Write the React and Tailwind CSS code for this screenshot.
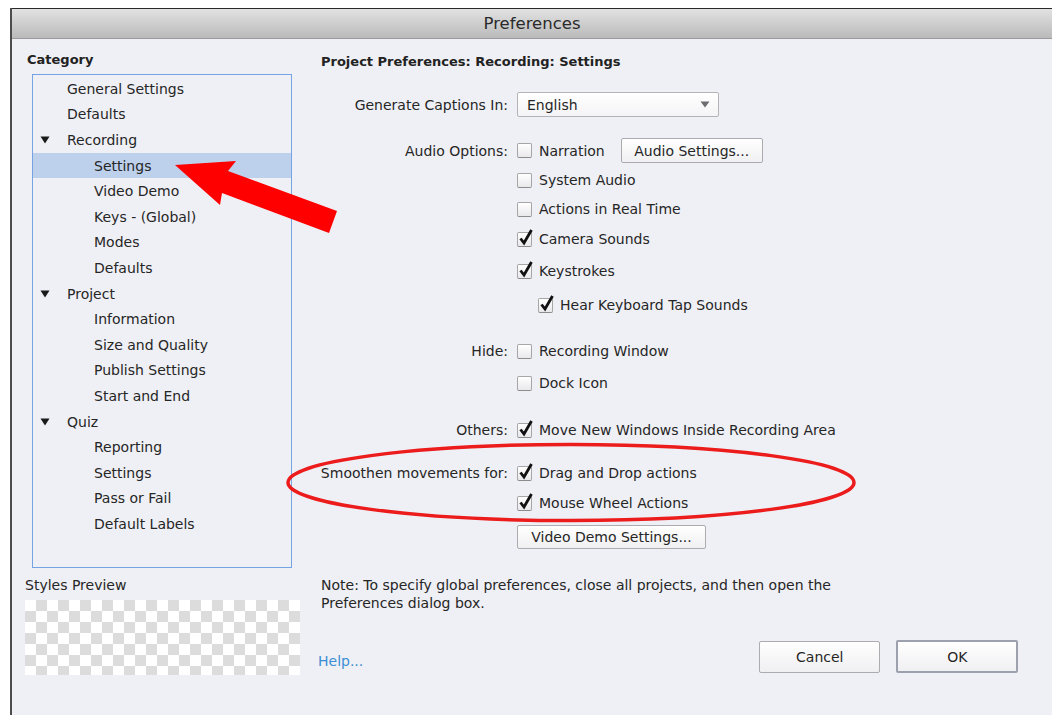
import React from "react";

const categories = [
  { label: "General Settings", level: 1 },
  { label: "Defaults", level: 1 },
  { label: "Recording", level: 0 },
  { label: "Settings", level: 2, selected: true },
  { label: "Video Demo", level: 2 },
  { label: "Keys - (Global)", level: 2 },
  { label: "Modes", level: 2 },
  { label: "Defaults", level: 2 },
  { label: "Project", level: 0 },
  { label: "Information", level: 2 },
  { label: "Size and Quality", level: 2 },
  { label: "Publish Settings", level: 2 },
  { label: "Start and End", level: 2 },
  { label: "Quiz", level: 0 },
  { label: "Reporting", level: 2 },
  { label: "Settings", level: 2 },
  { label: "Pass or Fail", level: 2 },
  { label: "Default Labels", level: 2 },
];

function Disclosure() {
  return (
    <svg width="10" height="8" viewBox="0 0 10 8" className="absolute left-[7px] top-[9px]">
      <path d="M0.5 0.5 L9.5 0.5 L5 7.5 Z" fill="#1a1a1a" />
    </svg>
  );
}

function CategoryRow({ item }) {
  const pad = item.level === 2 ? "pl-[61px]" : "pl-[34px]";
  return (
    <div
      className={`relative flex h-[25.6px] items-center ${pad} ${
        item.selected ? "bg-[#bdd0ec]" : ""
      }`}
    >
      {item.level === 0 && <Disclosure />}
      <span>{item.label}</span>
    </div>
  );
}

function Checkbox({ checked }) {
  return (
    <span className="relative inline-block h-[15px] w-[15px] shrink-0 rounded-[2px] border border-[#a6a6a6] border-b-[#8c8c8c] bg-gradient-to-b from-white to-[#e9e9ec]">
      {checked && (
        <svg
          width="16"
          height="18"
          viewBox="0 0 16 18"
          className="absolute left-[0px] top-[-5px]"
        >
          <path
            d="M2.5 10.5 L6 15 L13.5 2"
            fill="none"
            stroke="#111"
            strokeWidth="2.8"
            strokeLinejoin="miter"
          />
        </svg>
      )}
    </span>
  );
}

function CheckItem({ checked, children, indent }) {
  return (
    <div className={`flex items-center gap-[7px] ${indent ? "ml-[21px]" : ""}`}>
      <Checkbox checked={checked} />
      <span>{children}</span>
    </div>
  );
}

function Row({ label, mt, children, h = "h-[24px]" }) {
  return (
    <div className={`flex items-center ${h} ${mt}`}>
      <div className="w-[208px] shrink-0 text-right">{label}</div>
      <div className="ml-[9px] flex items-center">{children}</div>
    </div>
  );
}

function PushButton({ children, className = "" }) {
  return (
    <div
      className={`flex items-center justify-center rounded-[2px] border border-[#acacb0] bg-gradient-to-b from-white to-[#f0f0f2] ${className}`}
    >
      {children}
    </div>
  );
}

export default function App() {
  return (
    <div className="relative h-[715px] w-[1052px] overflow-hidden bg-white pl-[10px] pt-[8px] font-['DejaVu_Sans',sans-serif] text-[14px] leading-[20px] text-[#262626]">
      <div className="flex h-full flex-col border-l-[2px] border-[#4c4c4c] bg-[#eff0f5]">
        {/* title bar */}
        <div className="flex h-[31px] shrink-0 items-center justify-center border-t border-b border-t-[#2a2a2a] border-b-[#9c9c9c] bg-gradient-to-b from-[#e2e2e2] to-[#bababa] text-[16.5px] text-[#2a2a2a]">
          Preferences
        </div>

        <div className="flex flex-1">
          {/* category pane */}
          <div className="w-[288px] shrink-0">
            <div className="pl-[15px] pt-[11px] text-[13px] font-bold leading-[20px] text-[#222]">
              Category
            </div>
            <div className="ml-[20px] mt-[4px] h-[494px] w-[260px] border-[1.5px] border-[#76a3e3] pt-px">
              {categories.map((c, i) => (
                <CategoryRow key={i} item={c} />
              ))}
            </div>
            <div className="mt-[8px] pl-[13px] leading-[18px]">Styles Preview</div>
            <div className="ml-[13px] mt-[6px] h-[75px] w-[275px] bg-[image:conic-gradient(#dcdcdc_25%,#ffffff_0_50%,#dcdcdc_0_75%,#ffffff_0)] bg-[length:22px_22px]" />
          </div>

          {/* settings pane */}
          <div className="flex-1">
            <div className="ml-[21px] mt-[13px] h-[20px] text-[13px] font-bold text-[#222]">
              Project Preferences: Recording: Settings
            </div>

            <Row label="Generate Captions In:" mt="mt-[20px]" h="h-[25px]">
              <div className="flex h-[25px] w-[202px] items-center justify-between rounded-[2px] border border-[#b4b4b8] bg-gradient-to-b from-white to-[#f4f4f6] pl-[9px] pr-[8px]">
                <span>English</span>
                <svg width="10" height="7" viewBox="0 0 10 7">
                  <path d="M0.5 0.5 L9.5 0.5 L5 6.5 Z" fill="#6d6d72" />
                </svg>
              </div>
            </Row>

            <Row label="Audio Options:" mt="mt-[21px]" h="h-[25px]">
              <CheckItem>Narration</CheckItem>
              <PushButton className="ml-[16px] h-[25px] w-[142px]">Audio Settings...</PushButton>
            </Row>

            <Row label="" mt="mt-[5px]">
              <CheckItem>System Audio</CheckItem>
            </Row>
            <Row label="" mt="mt-[5px]">
              <CheckItem>Actions in Real Time</CheckItem>
            </Row>
            <Row label="" mt="mt-[6px]">
              <CheckItem checked>Camera Sounds</CheckItem>
            </Row>
            <Row label="" mt="mt-[8px]">
              <CheckItem checked>Keystrokes</CheckItem>
            </Row>
            <Row label="" mt="mt-[10px]">
              <CheckItem checked indent>
                Hear Keyboard Tap Sounds
              </CheckItem>
            </Row>

            <Row label="Hide:" mt="mt-[22px]">
              <CheckItem>Recording Window</CheckItem>
            </Row>
            <Row label="" mt="mt-[8px]">
              <CheckItem>Dock Icon</CheckItem>
            </Row>

            <Row label="Others:" mt="mt-[23px]">
              <CheckItem checked>Move New Windows Inside Recording Area</CheckItem>
            </Row>

            <Row label="Smoothen movements for:" mt="mt-[19px]">
              <CheckItem checked>Drag and Drop actions</CheckItem>
            </Row>
            <Row label="" mt="mt-[6px]">
              <CheckItem checked>Mouse Wheel Actions</CheckItem>
            </Row>

            <div className="ml-[217px] mt-[10px]">
              <PushButton className="h-[24px] w-[189px]">Video Demo Settings...</PushButton>
            </div>

            <div className="ml-[21px] mt-[27px] w-[560px] leading-[18px]">
              Note: To specify global preferences, close all projects, and then open the
              Preferences dialog box.
            </div>

            <div className="mt-[28px] flex h-[33px] items-center">
              <span className="ml-[18px] mt-[8px] text-[#3b8ed3]">Help...</span>
              <PushButton className="ml-[396px] h-[32px] w-[121px]">Cancel</PushButton>
              <div className="ml-[16px] flex h-[33px] w-[122px] items-center justify-center rounded-[2px] border-[2.5px] border-[#9da1ad] bg-gradient-to-b from-white to-[#f0f0f3]">
                OK
              </div>
            </div>
          </div>
        </div>
      </div>

      {/* annotation overlay: pointer arrow and highlight ring */}
      <svg
        className="pointer-events-none absolute left-0 top-0"
        width="1052"
        height="715"
        viewBox="0 0 1052 715"
      >
        <polygon
          points="175,165 236,161 228,171 337,211 329,233 222,193 220,205"
          fill="#fe0000"
        />
        <ellipse
          cx="571"
          cy="482.5"
          rx="283"
          ry="38"
          fill="none"
          stroke="#ec1c1c"
          strokeWidth="3.5"
        />
      </svg>
    </div>
  );
}
